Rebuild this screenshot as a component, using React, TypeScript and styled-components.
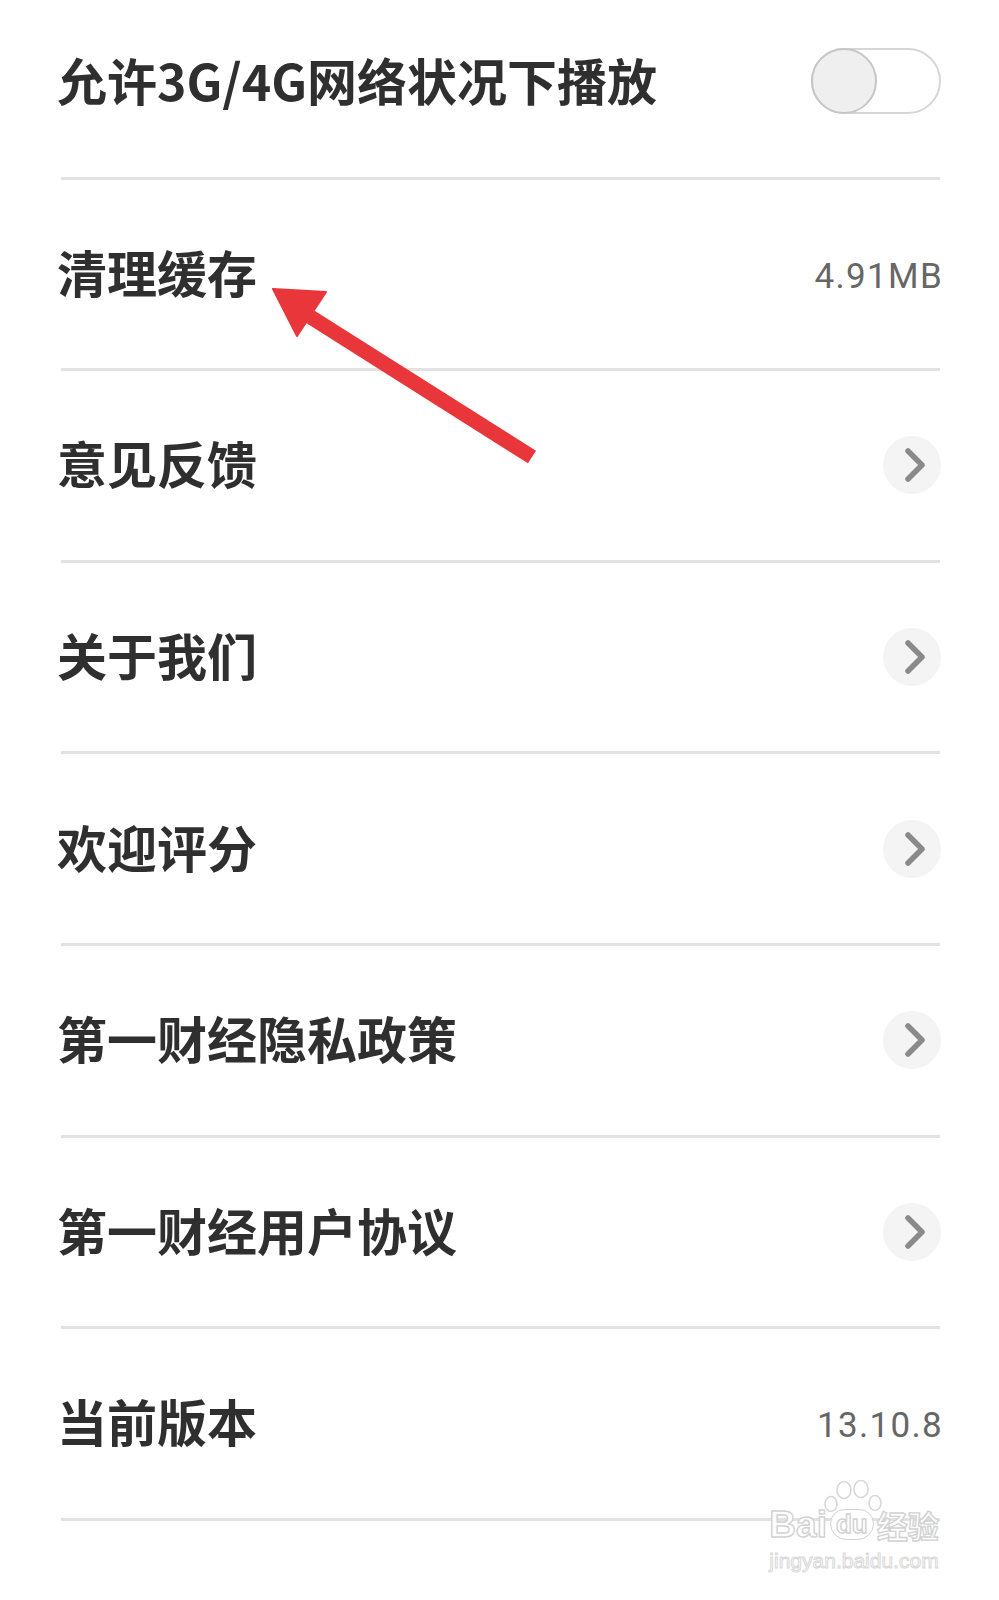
import React from "react";
import styled, { createGlobalStyle } from "styled-components";

const GlobalStyle = createGlobalStyle`
    body {
        margin: 0;
        background: #ffffff;
        font-family: "Noto Sans CJK SC", "Noto Sans", sans-serif;
    }
`;

type Item = {
    label: string;
    kind: "toggle" | "value" | "link";
    value?: string;
};

const items: Item[] = [
    { label: "允许3G/4G网络状况下播放", kind: "toggle" },
    { label: "清理缓存", kind: "value", value: "4.91MB" },
    { label: "意见反馈", kind: "link" },
    { label: "关于我们", kind: "link" },
    { label: "欢迎评分", kind: "link" },
    { label: "第一财经隐私政策", kind: "link" },
    { label: "第一财经用户协议", kind: "link" },
    { label: "当前版本", kind: "value", value: "13.10.8" },
];

export default function App() {
    return (
        <Page>
            <GlobalStyle />
            <List>
                {items.map((item) => (
                    <React.Fragment key={item.label}>
                        <Row>
                            <Label>{item.label}</Label>
                            {item.kind === "toggle" && (
                                <Toggle>
                                    <Knob />
                                </Toggle>
                            )}
                            {item.kind === "value" && <Value>{item.value}</Value>}
                            {item.kind === "link" && (
                                <Chevron>
                                    <svg width="24" height="36" viewBox="0 0 24 36">
                                        <path d="M5 4 L19 18 L5 32" fill="none" stroke="#8a8a8a" strokeWidth="5.5" strokeLinecap="round" strokeLinejoin="round" />
                                    </svg>
                                </Chevron>
                            )}
                        </Row>
                        <Divider />
                    </React.Fragment>
                ))}
            </List>

            {/* annotation arrow pointing at 清理缓存 */}
            <Arrow width="290" height="200" viewBox="0 0 290 200">
                <line x1="267" y1="177" x2="44" y2="36" stroke="#e8363b" strokeWidth="15" />
                <polygon points="8,9 61,12 32,56" fill="#e8363b" stroke="#e8363b" strokeWidth="2" strokeLinejoin="round" />
            </Arrow>

            <Watermark>
                <Paw viewBox="0 0 60 34" width="60" height="34">
                    <g fill="#ffffff" stroke="#d8d8d8" strokeWidth="1.6">
                        <ellipse cx="20" cy="10" rx="7" ry="8.5" />
                        <ellipse cx="37" cy="9" rx="7" ry="8.5" />
                        <ellipse cx="7" cy="24" rx="6" ry="7.5" />
                        <ellipse cx="51" cy="23" rx="6" ry="7.5" />
                    </g>
                </Paw>
                <Brand>
                    <BrandLatin>Bai</BrandLatin>
                    <BrandDu>du</BrandDu>
                    <BrandCn>经验</BrandCn>
                </Brand>
                <BrandUrl>jingyan.baidu.com</BrandUrl>
            </Watermark>
        </Page>
    );
}

const Page = styled.div`
    position: relative;
    width: 999px;
    height: 1600px;
    overflow: hidden;
    background: #ffffff;
`;

const List = styled.div`
    display: flex;
    flex-direction: column;
    margin-top: -12px;
`;

const Row = styled.div`
    display: flex;
    align-items: center;
    justify-content: space-between;
    height: 188.6px;
    padding: 0 58px 0 57px;
`;

const Label = styled.span`
    font-family: "Noto Sans CJK SC", sans-serif;
    font-size: 50px;
    font-weight: 700;
    color: #2f2f2f;
    line-height: 1;
    padding-bottom: 6px;
`;

const Value = styled.span`
    font-family: Roboto, "Noto Sans", sans-serif;
    font-size: 35px;
    letter-spacing: 1.3px;
    color: #666666;
    margin-right: -2px;
    margin-top: 5px;
`;

const Divider = styled.div`
    height: 3px;
    margin: 0 59px 0 61px;
    background: #e2e2e2;
`;

const Toggle = styled.div`
    position: relative;
    width: 126px;
    height: 62px;
    border: 2px solid #d6d6d6;
    border-radius: 33px;
    background: #ffffff;
    margin-top: -3px;
`;

const Knob = styled.div`
    position: absolute;
    left: -2px;
    top: -2px;
    width: 62px;
    height: 62px;
    border: 2px solid #c6c6c6;
    border-radius: 50%;
    background: #efefef;
`;

const Chevron = styled.div`
    display: flex;
    align-items: center;
    justify-content: center;
    width: 58px;
    height: 58px;
    border-radius: 50%;
    background: #f4f4f4;
    padding-left: 5px;
    box-sizing: border-box;
`;

const Arrow = styled.svg`
    position: absolute;
    left: 265px;
    top: 280px;
`;

const Watermark = styled.div`
    position: absolute;
    left: 758px;
    top: 1480px;
    width: 192px;
    display: flex;
    flex-direction: column;
    align-items: center;
`;

const Paw = styled.svg`
    margin-bottom: -8px;
`;

const Brand = styled.div`
    display: flex;
    align-items: center;
    gap: 3px;
    font-family: "Liberation Sans", sans-serif;
    color: #ffffff;
    -webkit-text-stroke: 1.4px #d2d2d2;
    line-height: 1;
`;

const BrandLatin = styled.span`
    font-size: 37px;
    font-weight: 700;
`;

const BrandDu = styled.span`
    font-size: 26px;
    font-weight: 700;
    border: 1.6px solid #d2d2d2;
    border-radius: 16px 16px 18px 18px;
    padding: 1px 5px 2px;
    background: #ffffff;
`;

const BrandCn = styled.span`
    font-family: "Noto Sans CJK SC", sans-serif;
    font-size: 31px;
    font-weight: 700;
`;

const BrandUrl = styled.div`
    font-family: "Liberation Sans", sans-serif;
    font-size: 21px;
    color: #ffffff;
    -webkit-text-stroke: 1px #d8d8d8;
    margin-top: 6px;
`;
